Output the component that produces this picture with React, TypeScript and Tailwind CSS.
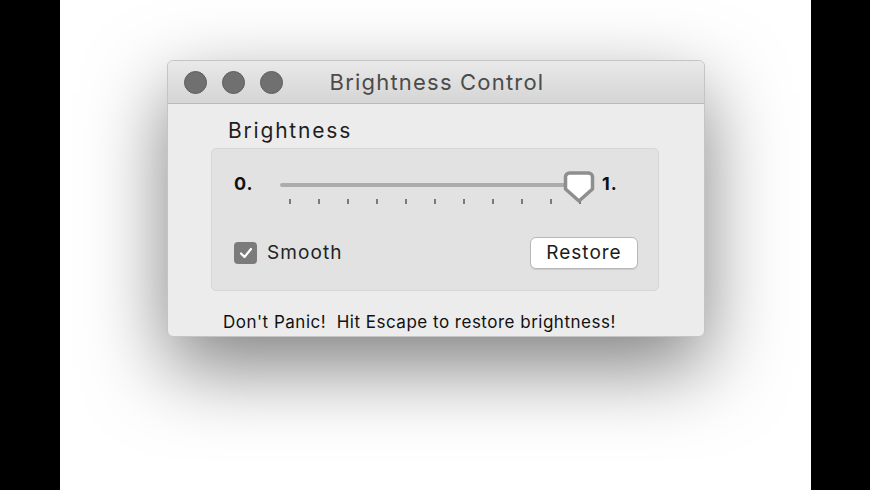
import React from "react";

const ticks = Array.from({ length: 11 }, (_, i) => i);

export default function App() {
  return (
    <div className="flex w-[870px] h-[490px] overflow-hidden" style={{ fontFamily: "Inter, Roboto, 'Liberation Sans', sans-serif" }}>
      <div className="w-[60px] h-full bg-black shrink-0" />
      <div className="flex-1 h-full bg-white pt-[60px] pl-[107px]">
        <div className="w-[538px] h-[277px] rounded-[6px] bg-[#ececec] border border-[#c4c4c4] shadow-[0_30px_80px_rgba(0,0,0,0.5)] flex flex-col overflow-hidden">
          {/* title bar */}
          <div className="h-[43px] shrink-0 flex items-center px-[16px] bg-gradient-to-b from-[#e9e9e9] to-[#d5d5d5] border-b border-[#b9b9b9] relative">
            <div className="flex gap-[15px]">
              <div className="w-[23px] h-[23px] rounded-full bg-[#707070] border border-[#5e5e5e]" />
              <div className="w-[23px] h-[23px] rounded-full bg-[#707070] border border-[#5e5e5e]" />
              <div className="w-[23px] h-[23px] rounded-full bg-[#707070] border border-[#5e5e5e]" />
            </div>
            <div className="absolute inset-0 flex items-center justify-center text-[22px] tracking-[1.2px] text-[#4b4b4b] pl-[2px]">
              Brightness Control
            </div>
          </div>
          {/* body */}
          <div className="flex-1 flex flex-col pl-[43px] pr-[45px] pt-[14px]">
            <div className="text-[21px] tracking-[1.8px] leading-[26px] text-[#1e1e1e] pl-[17px]">Brightness</div>
            <div className="mt-[4px] h-[143px] rounded-[5px] bg-[#e2e2e2] border border-[#d6d6d6] flex flex-col pl-[22px] pr-[20px] pt-[24px]">
              <div className="flex items-start h-[40px]">
                <div className="text-[18px] font-bold tracking-[1px] leading-[22px] text-[#111] w-[46px]">0.</div>
                <div className="relative w-[316px] h-[40px]">
                  <div className="absolute left-0 right-[14px] top-[10px] h-[4px] rounded-full bg-[#acacac]" />
                  {ticks.map((i) => (
                    <div
                      key={i}
                      className="absolute top-[26px] w-[1.5px] h-[5px] bg-[#7a7a7a]"
                      style={{ left: 9 + i * 29 }}
                    />
                  ))}
                  <svg className="absolute left-[283px] top-[-3px]" width="32" height="34" viewBox="0 0 32 34">
                    <path
                      d="M6.5 3 H25.5 A4 4 0 0 1 29.5 7 V19 L16 31 L2.5 19 V7 A4 4 0 0 1 6.5 3 Z"
                      fill="#ffffff"
                      stroke="#8e8e8e"
                      strokeWidth="3.5"
                      strokeLinejoin="round"
                    />
                  </svg>
                </div>
                <div className="text-[18px] font-bold tracking-[1px] leading-[22px] text-[#111] ml-[6px]">1.</div>
              </div>
              <div className="flex items-center justify-between mt-[24px]">
                <div className="flex items-center gap-[10px]">
                  <div className="w-[23px] h-[22px] rounded-[4px] bg-[#7b7b7b] flex items-center justify-center">
                    <svg width="14" height="12" viewBox="0 0 14 12">
                      <path d="M2 6.5 L5.5 10 L12 2" fill="none" stroke="#ffffff" strokeWidth="2.2" strokeLinecap="round" strokeLinejoin="round" />
                    </svg>
                  </div>
                  <span className="text-[19px] tracking-[1.1px] text-[#222]">Smooth</span>
                </div>
                <div className="w-[108px] h-[32px] rounded-[6px] bg-white border border-[#b8b8b8] flex items-center justify-center text-[19px] tracking-[1px] text-[#1c1c1c] shadow-[0_1px_1px_rgba(0,0,0,0.1)]">
                  Restore
                </div>
              </div>
            </div>
            <div className="mt-[20px] pl-[12px] text-[17px] tracking-[0.5px] leading-[22px] text-[#111] whitespace-pre">
              {"Don't Panic!  Hit Escape to restore brightness!"}
            </div>
          </div>
        </div>
      </div>
      <div className="w-[59px] h-full bg-black shrink-0" />
    </div>
  );
}
